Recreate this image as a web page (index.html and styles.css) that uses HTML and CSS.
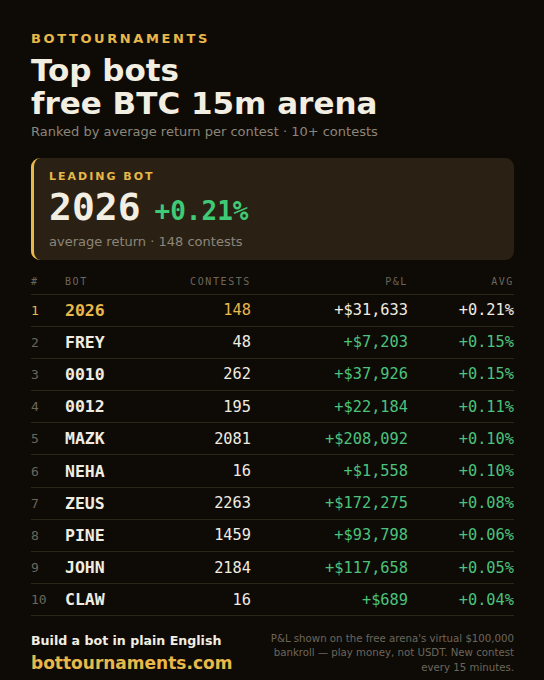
FILE: index.html
```html
<!DOCTYPE html>
<html lang="en">
<head>
    <meta charset="UTF-8">
    <meta name="viewport" content="width=device-width, initial-scale=1.0">
    <title>Top bots - free BTC 15m arena</title>
    <link rel="stylesheet" href="styles.css">
</head>
<body>
    <div class="poster">
        <div class="brand">BOTTOURNAMENTS</div>
        <h1 class="title">Top bots<br>free BTC 15m arena</h1>
        <p class="subtitle">Ranked by average return per contest · 10+ contests</p>

        <div class="leader">
            <div class="leader-label">LEADING BOT</div>
            <div class="leader-main">
                <span class="leader-name">2026</span>
                <span class="leader-avg">+0.21%</span>
            </div>
            <div class="leader-meta">average return · 148 contests</div>
        </div>

        <table class="board">
            <thead>
                <tr>
                    <th class="rank">#</th>
                    <th class="bot">BOT</th>
                    <th class="num col-contests">CONTESTS</th>
                    <th class="num col-pnl">P&amp;L</th>
                    <th class="num col-avg">AVG</th>
                </tr>
            </thead>
            <tbody>
                <tr class="top">
                    <td class="rank">1</td>
                    <td class="bot">2026</td>
                    <td class="num">148</td>
                    <td class="num">+$31,633</td>
                    <td class="num">+0.21%</td>
                </tr>
                <tr>
                    <td class="rank">2</td>
                    <td class="bot">FREY</td>
                    <td class="num">48</td>
                    <td class="num up">+$7,203</td>
                    <td class="num up">+0.15%</td>
                </tr>
                <tr>
                    <td class="rank">3</td>
                    <td class="bot">0010</td>
                    <td class="num">262</td>
                    <td class="num up">+$37,926</td>
                    <td class="num up">+0.15%</td>
                </tr>
                <tr>
                    <td class="rank">4</td>
                    <td class="bot">0012</td>
                    <td class="num">195</td>
                    <td class="num up">+$22,184</td>
                    <td class="num up">+0.11%</td>
                </tr>
                <tr>
                    <td class="rank">5</td>
                    <td class="bot">MAZK</td>
                    <td class="num">2081</td>
                    <td class="num up">+$208,092</td>
                    <td class="num up">+0.10%</td>
                </tr>
                <tr>
                    <td class="rank">6</td>
                    <td class="bot">NEHA</td>
                    <td class="num">16</td>
                    <td class="num up">+$1,558</td>
                    <td class="num up">+0.10%</td>
                </tr>
                <tr>
                    <td class="rank">7</td>
                    <td class="bot">ZEUS</td>
                    <td class="num">2263</td>
                    <td class="num up">+$172,275</td>
                    <td class="num up">+0.08%</td>
                </tr>
                <tr>
                    <td class="rank">8</td>
                    <td class="bot">PINE</td>
                    <td class="num">1459</td>
                    <td class="num up">+$93,798</td>
                    <td class="num up">+0.06%</td>
                </tr>
                <tr>
                    <td class="rank">9</td>
                    <td class="bot">JOHN</td>
                    <td class="num">2184</td>
                    <td class="num up">+$117,658</td>
                    <td class="num up">+0.05%</td>
                </tr>
                <tr>
                    <td class="rank">10</td>
                    <td class="bot">CLAW</td>
                    <td class="num">16</td>
                    <td class="num up">+$689</td>
                    <td class="num up">+0.04%</td>
                </tr>
            </tbody>
        </table>

        <div class="footer">
            <div class="cta">
                <div class="cta-line">Build a bot in plain English</div>
                <div class="cta-site">bottournaments.com</div>
            </div>
            <p class="note">P&amp;L shown on the free arena's virtual $100,000 bankroll — play money, not USDT. New contest every 15 minutes.</p>
        </div>
    </div>
</body>
</html>
```

FILE: styles.css
```css
/* Base */
* {
    margin: 0;
    padding: 0;
    box-sizing: border-box;
}

body {
    background: #0e0b07;
    color: #f1ece0;
    font-family: 'DejaVu Sans', Verdana, sans-serif;
    width: 544px;
    height: 680px;
    overflow: hidden;
}

.poster {
    padding: 31px 30px 0 31px;
}

/* Header */
.brand {
    color: #e8b84a;
    font-size: 13px;
    font-weight: bold;
    letter-spacing: 2.6px;
    line-height: 16px;
}

.title {
    margin-top: 7px;
    font-size: 31px;
    font-weight: bold;
    line-height: 33px;
    color: #f3eee2;
}

.subtitle {
    margin-top: 3px;
    font-size: 13px;
    line-height: 18px;
    color: #8c8679;
}

/* Leading bot card */
.leader {
    margin-top: 17px;
    background: #2a2114;
    border-left: 3px solid #e8b84a;
    border-radius: 9px;
    padding: 12px 16px 10px 15px;
}

.leader-label {
    color: #e8b84a;
    font-size: 11px;
    font-weight: bold;
    letter-spacing: 2px;
    line-height: 14px;
}

.leader-main {
    display: flex;
    align-items: baseline;
    gap: 14px;
    margin-top: 2px;
    line-height: 43px;
}

.leader-name {
    font-family: 'DejaVu Sans Mono', monospace;
    font-weight: bold;
    font-size: 38px;
    color: #f3eee2;
}

.leader-avg {
    font-family: 'DejaVu Sans Mono', monospace;
    font-weight: bold;
    font-size: 26px;
    color: #3fca76;
}

.leader-meta {
    font-size: 13px;
    line-height: 17px;
    color: #8c8679;
}

/* Leaderboard */
.board {
    width: 483px;
    margin-top: 10px;
    border-collapse: collapse;
    table-layout: fixed;
    font-family: 'DejaVu Sans Mono', monospace;
}

.board th {
    font-size: 10px;
    font-weight: normal;
    letter-spacing: 1.6px;
    color: #6c665a;
    height: 24px;
    vertical-align: middle;
    border-bottom: 1px solid #2b2619;
    text-align: left;
}

.board td {
    height: 32.2px;
    font-size: 15.3px;
    color: #f1ece0;
    border-bottom: 1px solid #2b2619;
    vertical-align: middle;
}

.board .rank {
    width: 34px;
    font-size: 13px;
    color: #6c665a;
}

.board th.rank {
    font-size: 10px;
}

.board .bot {
    width: 90px;
}

.board td.bot {
    font-weight: bold;
    font-size: 16.5px;
}

.board .col-contests {
    width: 96px;
}

.board .col-pnl {
    width: 157px;
}

.board .col-avg {
    width: 106px;
}

.board .num {
    text-align: right;
}

.board td.up {
    color: #4cc27c;
}

.board tr.top td.rank,
.board tr.top td.bot,
.board tr.top td:nth-child(3) {
    color: #e8b84a;
}

/* Footer */
.footer {
    display: flex;
    justify-content: space-between;
    align-items: center;
    margin-top: 15px;
}

.cta-line {
    font-size: 12.6px;
    font-weight: bold;
    color: #f3eee2;
    line-height: 20px;
}

.cta-site {
    font-size: 17px;
    font-weight: bold;
    color: #e8b84a;
    line-height: 24px;
}

.note {
    width: 255px;
    font-size: 10.2px;
    line-height: 14.5px;
    text-align: right;
    color: #6c665a;
}
```
